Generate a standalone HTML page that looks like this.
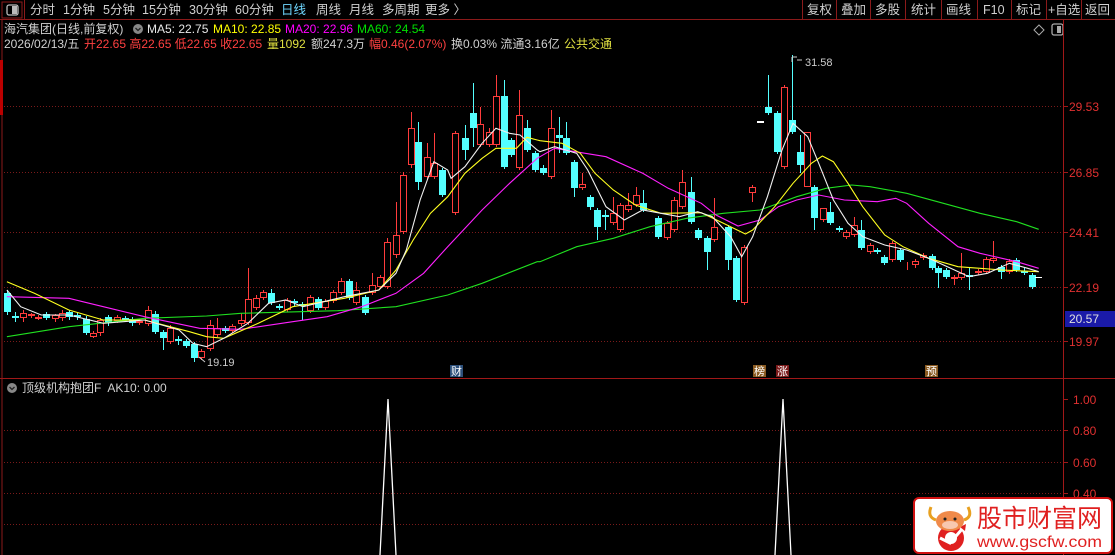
<!DOCTYPE html>
<html><head><meta charset="utf-8">
<style>
html,body{margin:0;padding:0;background:#000;width:1115px;height:555px;overflow:hidden;font-family:"Liberation Sans","Noto Sans CJK SC",sans-serif;}
svg{position:absolute;left:0;top:0}
.t{font-family:"Liberation Sans","Noto Sans CJK SC",sans-serif;}
</style></head><body>
<svg id="s" width="1115" height="555" xmlns="http://www.w3.org/2000/svg">
<rect width="1115" height="555" fill="#000"/>
<line x1="0" y1="19.5" x2="1115" y2="19.5" stroke="#8b1a1a"/>
<rect x="2" y="2" width="20" height="16" fill="none" stroke="#8b1a1a"/>
<rect x="7" y="5" width="11" height="10" rx="2" fill="none" stroke="#bbb" stroke-width="1.3"/>
<rect x="12" y="6" width="5" height="8" fill="#bbb"/>
<line x1="24.5" y1="0" x2="24.5" y2="19" stroke="#8b1a1a"/>
<g class="t" font-size="12.5" fill="#d0d0d0">
<text x="30" y="14">分时</text><text x="63" y="14">1分钟</text><text x="103" y="14">5分钟</text>
<text x="142" y="14">15分钟</text><text x="189" y="14">30分钟</text><text x="235" y="14">60分钟</text>
<text x="281" y="14" fill="#6fd7ff">日线</text><text x="316" y="14">周线</text><text x="349" y="14">月线</text>
<text x="382" y="14">多周期</text><text x="425" y="14">更多 〉</text>
</g>
<g stroke="#8b1a1a">
<line x1="802.5" y1="0" x2="802.5" y2="19"/><line x1="836.5" y1="0" x2="836.5" y2="19"/>
<line x1="870.5" y1="0" x2="870.5" y2="19"/><line x1="905.5" y1="0" x2="905.5" y2="19"/>
<line x1="941.5" y1="0" x2="941.5" y2="19"/><line x1="977.5" y1="0" x2="977.5" y2="19"/>
<line x1="1011.5" y1="0" x2="1011.5" y2="19"/><line x1="1046.5" y1="0" x2="1046.5" y2="19"/>
<line x1="1081.5" y1="0" x2="1081.5" y2="19"/>
</g>
<g class="t" font-size="12.5" fill="#d0d0d0">
<text x="807" y="14">复权</text><text x="841" y="14">叠加</text><text x="875" y="14">多股</text>
<text x="911" y="14">统计</text><text x="946" y="14">画线</text><text x="983" y="14">F10</text>
<text x="1016" y="14">标记</text><text x="1048" y="14">+自选</text><text x="1085" y="14">返回</text>
</g>
<g class="t" font-size="12">
<text x="4" y="33" fill="#d0d0d0">海汽集团(日线,前复权)</text>
<circle cx="138" cy="29" r="5" fill="#888"/>
<path d="M135.5 28 L138 30.5 L140.5 28" stroke="#222" stroke-width="1.3" fill="none"/>
<text x="147" y="33" fill="#e8e8e8">MA5: 22.75</text>
<text x="213" y="33" fill="#ffff00">MA10: 22.85</text>
<text x="285" y="33" fill="#ff00ff">MA20: 22.96</text>
<text x="357" y="33" fill="#00e000">MA60: 24.54</text>
<text x="4" y="48" fill="#d0d0d0">2026/02/13/五</text>
<text x="84" y="48" fill="#ff4040">开22.65 高22.65 低22.65 收22.65</text>
<text x="267" y="48" fill="#e0e040">量1092</text>
<text x="311" y="48" fill="#d0d0d0">额247.3万</text>
<text x="369" y="48" fill="#ff4040">幅0.46(2.07%)</text>
<text x="451" y="48" fill="#d0d0d0">换0.03% 流通3.16亿</text>
<text x="564" y="48" fill="#e0e040">公共交通</text>
</g>
<path d="M1039 25 L1044 30 L1039 35 L1034 30Z" fill="none" stroke="#aaa"/>
<rect x="1052" y="24" width="11" height="11" rx="2" fill="none" stroke="#aaa" stroke-width="1.3"/>
<rect x="1057" y="26" width="4" height="7" fill="#aaa"/>
<line x1="1063.5" y1="20" x2="1063.5" y2="555" stroke="#a01818"/>
<line x1="0" y1="378.5" x2="1115" y2="378.5" stroke="#a01818"/>
<line x1="2" y1="20" x2="2" y2="555" stroke="#8b1a1a"/>
<rect x="0" y="60" width="3" height="55" fill="#b00"/>
<g stroke="#7a1a1a" stroke-dasharray="1,2">
<line x1="4" y1="106.5" x2="1062" y2="106.5"/><line x1="4" y1="172.5" x2="1062" y2="172.5"/>
<line x1="4" y1="232.5" x2="1062" y2="232.5"/><line x1="4" y1="287.5" x2="1062" y2="287.5"/>
<line x1="4" y1="341.5" x2="1062" y2="341.5"/>
<line x1="4" y1="430.5" x2="1062" y2="430.5"/><line x1="4" y1="462.5" x2="1062" y2="462.5"/>
<line x1="4" y1="493.5" x2="1062" y2="493.5"/><line x1="4" y1="524.5" x2="1062" y2="524.5"/>
</g>
<g stroke="#a01818">
<line x1="1063" y1="106.5" x2="1068" y2="106.5"/><line x1="1063" y1="172.5" x2="1068" y2="172.5"/>
<line x1="1063" y1="232.5" x2="1068" y2="232.5"/><line x1="1063" y1="287.5" x2="1068" y2="287.5"/>
<line x1="1063" y1="341.5" x2="1068" y2="341.5"/><line x1="1063" y1="399.5" x2="1068" y2="399.5"/>
<line x1="1063" y1="430.5" x2="1068" y2="430.5"/><line x1="1063" y1="462.5" x2="1068" y2="462.5"/>
<line x1="1063" y1="493.5" x2="1068" y2="493.5"/>
</g>
<g class="t" font-size="12" fill="#e03030">
<text x="1069" y="111">29.53</text><text x="1069" y="177">26.85</text><text x="1069" y="237">24.41</text>
<text x="1069" y="292">22.19</text><text x="1069" y="346">19.97</text>
<text x="1073" y="404">1.00</text><text x="1073" y="435">0.80</text><text x="1073" y="467">0.60</text><text x="1073" y="498">0.40</text>
</g>
<rect x="1065" y="311" width="50" height="16" fill="#1a1aa8"/>
<text class="t" x="1069" y="323" font-size="12" fill="#e0e0e0">20.57</text>
<g id="cd"></g>
<g id="ma"></g>
<g class="t" font-size="11" fill="#ccc">
<text x="207" y="366">19.19</text><path d="M199 357 L205 362" stroke="#ccc"/>
<text x="805" y="66">31.58</text><path d="M792 57 L792 62 M792 57 L797 57 M797 60 L802 60" stroke="#ccc" fill="none"/>
</g>
<rect x="450" y="365" width="13" height="12" fill="#2c4f7a"/><text class="t" x="451" y="375" font-size="11" fill="#fff">财</text>
<rect x="753" y="365" width="13" height="12" fill="#8a5a20"/><text class="t" x="754" y="375" font-size="11" fill="#fff">榜</text>
<rect x="776" y="365" width="13" height="12" fill="#7a1a1a"/><text class="t" x="777" y="375" font-size="11" fill="#fff">涨</text>
<rect x="925" y="365" width="13" height="12" fill="#8a5a20"/><text class="t" x="926" y="375" font-size="11" fill="#fff">预</text>
<circle cx="12" cy="388" r="5" fill="#888"/>
<path d="M9.5 387 L12 389.5 L14.5 387" stroke="#222" stroke-width="1.3" fill="none"/>
<text class="t" x="22" y="392" font-size="12" fill="#d0d0d0">顶级机构抱团F&#160; AK10: 0.00</text>
<path d="M380 555 L388 399 L396 555" stroke="#fff" fill="none" stroke-width="1.3"/>
<path d="M775 555 L783 399 L791 555" stroke="#fff" fill="none" stroke-width="1.3"/>
<rect x="914" y="498" width="198" height="55" rx="5" fill="#fff" stroke="#d01010" stroke-width="2"/>
<circle cx="951" cy="538" r="13" fill="#e02020"/>
<circle cx="951" cy="538" r="6" fill="#fff"/>
<path d="M940 538 L950 543 L963 528" stroke="#fff" stroke-width="3" fill="none"/>
<path d="M960 527 L966 524 L965 531Z" fill="#e02020"/>
<path d="M931 507 Q927 517 936 520 M968 507 Q973 517 964 520" stroke="#e8a020" stroke-width="3" fill="none"/>
<ellipse cx="950" cy="521" rx="14" ry="10" fill="#f08a4a"/>
<ellipse cx="950" cy="525" rx="8" ry="4" fill="#f8c8b0"/>
<circle cx="945" cy="519" r="1.5" fill="#222"/><circle cx="955" cy="519" r="1.5" fill="#222"/>
<text class="t" x="977" y="527" font-size="25" fill="#e02020" textLength="125" lengthAdjust="spacingAndGlyphs">股市财富网</text>
<text class="t" x="977" y="547" font-size="16" fill="#e02020" textLength="125" lengthAdjust="spacingAndGlyphs">www.gscfw.com</text>
</svg>
<script>
var A=[[7,293,312,290,315,'c'],[15,316,318,312,322,'c'],[22,313,318,310,322,'r'],[30,314,316,313,318,'r'],[37,317,319,315,320,'r'],[45,314,318,312,320,'c'],[53,315,319,314,322,'r'],[60,313,318,310,321,'r'],[67,312,317,310,320,'c'],[75,315,317,313,320,'c'],[83,319,333,316,335,'c'],[90,333,337,331,338,'r'],[97,320,333,318,336,'r'],[105,317,323,315,326,'c'],[113,317,321,315,323,'r'],[121,318,320,316,322,'c'],[128,319,323,317,326,'c'],[135,321,323,319,325,'r'],[143,310,324,306,326,'r'],[150,314,332,311,334,'c'],[158,332,338,330,350,'c'],[165,328,342,325,344,'r'],[172,339,341,336,345,'c'],[180,341,346,339,348,'c'],[188,344,358,342,362,'c'],[195,351,358,349,360,'r'],[203,325,349,320,351,'r'],[210,328,335,318,337,'r'],[218,328,331,326,333,'c'],[225,326,331,324,333,'r'],[233,320,324,313,326,'r'],[240,299,323,268,325,'r'],[248,298,308,295,310,'r'],[255,292,298,290,300,'r'],[262,293,303,289,305,'c'],[270,306,308,304,310,'c'],[278,300,310,298,312,'r'],[285,301,303,299,306,'c'],[292,304,306,302,320,'c'],[300,297,311,295,313,'r'],[308,299,308,297,310,'c'],[315,301,308,299,310,'r'],[322,292,301,290,303,'r'],[330,281,293,278,295,'r'],[338,281,298,279,300,'c'],[345,290,303,282,305,'r'],[353,297,313,295,315,'c'],[360,285,293,273,295,'r'],[368,277,287,275,289,'r'],[375,242,287,238,289,'r'],[383,235,255,202,258,'r'],[390,175,232,172,234,'r'],[398,128,165,112,168,'r'],[405,142,182,122,190,'c'],[413,157,177,143,179,'r'],[420,163,177,133,179,'r'],[428,170,195,168,197,'c'],[440,133,213,131,215,'r'],[450,138,150,125,160,'c'],[458,113,128,83,147,'c'],[465,124,145,107,147,'r'],[473,132,145,128,147,'r'],[480,96,145,75,147,'r'],[488,96,167,80,169,'c'],[495,140,155,138,157,'c'],[502,115,168,90,170,'r'],[510,128,150,120,152,'c'],[518,153,170,151,172,'c']];
var B=[[543,168,173,165,175,'c'],[550,128,177,110,179,'r'],[557,135,138,117,153,'c'],[564,138,153,122,155,'c'],[571,162,188,160,197,'c'],[578,184,188,173,190,'r'],[585,197,207,195,210,'c'],[592,210,227,208,240,'c'],[599,215,217,210,230,'c'],[606,213,223,197,225,'r'],[613,205,230,203,232,'r'],[620,205,210,193,212,'r'],[627,195,205,187,207,'r'],[634,203,210,190,212,'c'],[647,218,237,216,239,'c'],[655,223,238,221,240,'r'],[662,200,230,197,232,'r'],[669,182,207,170,209,'r'],[677,192,222,177,224,'c'],[684,230,238,228,240,'c'],[692,238,252,236,270,'c'],[698,227,240,198,242,'r'],[711,227,260,225,270,'c'],[718,258,300,256,302,'c'],[725,247,303,245,305,'r'],[733,187,193,185,202,'r'],[740,121,123,121,123,'w'],[747,107,113,75,115,'c'],[755,113,152,111,154,'c'],[762,87,167,85,169,'r'],[769,120,132,55,134,'c'],[776,152,165,135,173,'c'],[783,132,187,132,187,'r'],[789,187,218,185,230,'c'],[797,208,220,210,222,'r'],[804,212,223,202,225,'c'],[812,228,230,226,232,'c'],[818,232,237,230,239,'r'],[825,225,235,217,237,'r'],[832,230,248,220,250,'c'],[840,245,252,243,254,'r'],[846,250,252,248,254,'c'],[853,257,263,255,265,'c'],[860,243,260,241,262,'r'],[867,250,260,248,262,'c'],[874,266,267,262,270,'r'],[881,261,265,259,268,'r'],[888,255,258,253,260,'r'],[896,256,268,254,270,'c'],[902,268,273,266,288,'c'],[909,270,277,268,279,'c'],[916,277,279,275,285,'r'],[923,273,278,253,280,'r'],[930,275,277,267,290,'c'],[938,271,273,269,275,'r'],[945,259,272,257,274,'r'],[952,258,261,241,263,'r'],[959,267,272,265,279,'c'],[966,261,272,259,274,'r'],[973,260,270,258,272,'c'],[980,271,273,268,275,'c'],[987,275,287,273,289,'c'],[993,277,278,277,278,'w']];
var h='';
function add(c,x){x=Math.round(x);var col=c[5]=='r'?'#ff3c3c':(c[5]=='c'?'#54ffff':'#fff');
var bh=Math.max(1,c[2]-c[1]);
h+='<line x1="'+(x+0.5)+'" y1="'+c[3]+'" x2="'+(x+0.5)+'" y2="'+c[4]+'" stroke="'+col+'"/>';
if(c[5]=='r')h+='<rect x="'+(x-2.5)+'" y="'+(c[1]+0.5)+'" width="6" height="'+(bh-1)+'" fill="#000" stroke="'+col+'"/>';
else h+='<rect x="'+(x-3)+'" y="'+c[1]+'" width="7" height="'+bh+'" fill="'+col+'"/>';}
A.forEach(function(c){add(c,c[0]*1.033)});
B.forEach(function(c){add(c,540+(c[0]-540)*1.1)});
document.getElementById('cd').innerHTML=h;
function L(a,b,col){var p=[];for(var i=0;i<a.length;i+=2)p.push((a[i]/2.904).toFixed(1)+','+(60+a[i+1]/3).toFixed(1));
for(var i=0;i<b.length;i+=2)p.push((540+b[i]/2.727).toFixed(1)+','+(50+b[i+1]/3).toFixed(1));
return '<polyline points="'+p.join(' ')+'" fill="none" stroke="'+col+'" stroke-width="1.1"/>';}
var m='';
m+=L([20,830,200,800,420,775,600,768,700,760,980,752,1150,740,1300,705,1400,670,1560,605],[0,635,100,590,200,565,300,530,400,505,500,490,600,480,700,440,780,415,850,405,900,410,1000,430,1100,460,1200,490,1300,515,1360,538],'#20e020');
m+=L([20,710,200,715,300,740,420,770,580,805,700,808,850,785,950,770,1050,740,1150,700,1230,640,1300,560,1400,450,1480,370,1560,295],[0,320,40,295,180,320,280,370,350,415,440,460,480,495,540,528,600,510,650,470,700,450,760,435,830,450,920,455,970,445,1000,460,1060,520,1140,590,1200,610,1300,635,1360,655],'#ff20ff');
m+=L([20,665,100,700,200,750,300,780,420,780,550,815,600,830,650,835,750,790,850,740,1000,715,1100,690,1150,630,1200,540,1250,460,1300,410,1350,340,1400,295,1440,265,1500,265,1530,232,1560,240],[0,272,60,280,110,310,150,370,200,420,260,465,330,490,440,488,500,520,560,552,580,540,640,470,690,400,740,340,770,318,800,335,840,400,880,470,940,555,990,590,1060,625,1140,650,1200,655,1260,660,1360,665],'#ffff20');
m+=L([20,690,60,740,120,765,200,765,300,790,420,780,520,810,560,850,600,860,650,835,720,790,780,730,830,720,880,740,1000,710,1100,690,1150,640,1180,570,1220,420,1260,305,1300,330,1310,355,1350,320,1400,250,1440,205,1480,220,1510,225,1560,270],[0,305,40,290,100,310,130,360,180,470,230,510,280,480,330,490,380,500,430,485,470,500,520,560,550,620,580,560,620,440,660,300,690,220,730,260,760,340,800,450,840,520,880,560,940,585,1000,600,1060,625,1120,655,1170,680,1220,670,1280,640,1330,655,1360,665],'#f0f0f0');
document.getElementById('ma').innerHTML=m;
</script>
</body></html>
